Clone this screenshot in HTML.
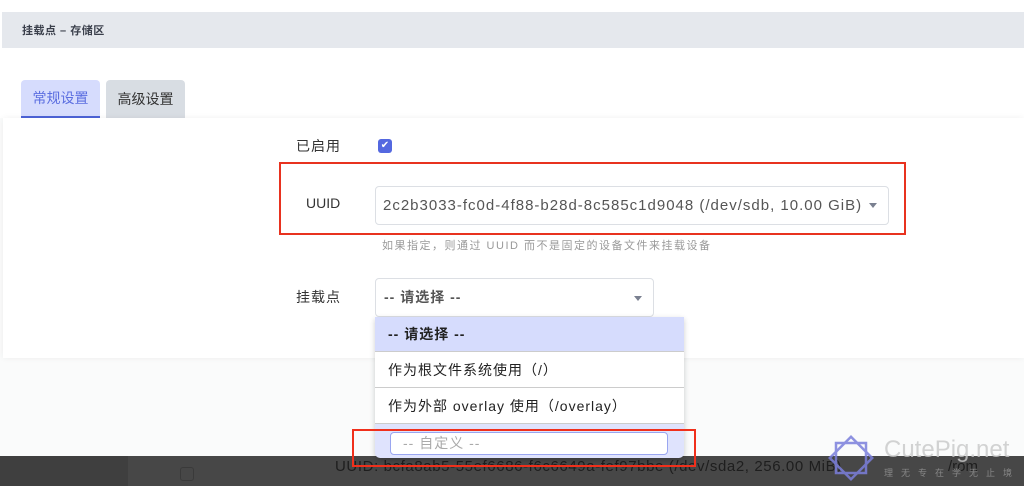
<!DOCTYPE html>
<html><head><meta charset="utf-8"><style>
*{margin:0;padding:0;box-sizing:border-box}
body{width:1024px;height:486px;overflow:hidden;background:#fff;font-family:"Liberation Sans","Noto Sans CJK SC",sans-serif;position:relative}
.a{position:absolute}
</style></head><body>
<div class="a" style="left:2px;top:12px;width:1022px;height:36px;background:#e5e8ed"></div>
<div class="a" style="left:22px;top:22px;font-size:11px;font-weight:bold;color:#3a3f4b;letter-spacing:.5px">挂载点 – 存储区</div>
<div class="a" style="left:0;top:118px;width:1024px;height:340px;background:#fafbfb"></div>
<div class="a" style="left:21px;top:80px;width:79px;height:38px;background:#d6dcfd;border-radius:4px 4px 0 0;border-bottom:2px solid #4d63d8;color:#5b6ee0;font-size:14px;text-align:center;line-height:36px">常规设置</div>
<div class="a" style="left:106px;top:80px;width:79px;height:38px;background:#d8dde3;border-radius:4px 4px 0 0;color:#333;font-size:14px;text-align:center;line-height:38px">高级设置</div>
<div class="a" style="left:3px;top:118px;width:1021px;height:240px;background:#fff;box-shadow:0 0 6px rgba(0,0,0,.06)"></div>
<div class="a" style="left:296px;top:136px;font-size:14px;color:#333;letter-spacing:1px">已启用</div>
<div class="a" style="left:378px;top:139px;width:14px;height:14px;background:#5468e0;border-radius:3px;color:#fff;font-size:10px;text-align:center;line-height:14px">✔</div>
<div class="a" style="left:279px;top:162px;width:627px;height:73px;border:2px solid #e8321f"></div>
<div class="a" style="left:306px;top:195px;font-size:14px;color:#333">UUID</div>
<div class="a" style="left:375px;top:186px;width:514px;height:39px;border:1px solid #dcdfe4;border-radius:4px;font-size:15px;color:#555;padding-left:7px;line-height:37px;letter-spacing:1px;white-space:nowrap">2c2b3033-fc0d-4f88-b28d-8c585c1d9048 (/dev/sdb, 10.00 GiB)</div>
<div class="a" style="left:869px;top:203px;border:4px solid transparent;border-top:5px solid #7a8090;width:0;height:0"></div>
<div class="a" style="left:382px;top:237px;font-size:11px;color:#999;letter-spacing:1.5px;white-space:nowrap">如果指定，则通过 UUID 而不是固定的设备文件来挂载设备</div>
<div class="a" style="left:296px;top:287px;font-size:14px;color:#333;letter-spacing:1px">挂载点</div>
<div class="a" style="left:375px;top:278px;width:279px;height:39px;border:1px solid #dcdfe4;border-radius:4px;font-size:14px;color:#555;padding-left:8px;line-height:37px;font-weight:bold;letter-spacing:1px">-- 请选择 --</div>
<div class="a" style="left:634px;top:296px;border:4px solid transparent;border-top:5px solid #7a8090;width:0;height:0"></div>
<div class="a" style="left:0;top:456px;width:1024px;height:30px;background:#474747"></div>
<div class="a" style="left:0;top:456px;width:128px;height:30px;background:#3f3f3f"></div>
<div class="a" style="left:180px;top:467px;width:14px;height:14px;border:1px solid #3a3a3a;border-radius:3px"></div>
<div class="a" style="left:335px;top:458px;font-size:15px;color:#1e1e1e;white-space:nowrap;letter-spacing:.6px">UUID: bcfa8ab5-55ef6686-f6c6649a-fef97bbe (/dev/sda2, 256.00 MiB)</div>
<div class="a" style="left:948px;top:458px;font-size:15px;color:#1e1e1e">/rom</div>
<div class="a" style="left:375px;top:317px;width:309px;height:141px;background:#dfe3fd;border-radius:0 0 5px 5px;box-shadow:0 2px 6px rgba(0,0,0,.2);overflow:hidden">
<div style="height:35px;background:#d6dcfd;border-bottom:1px solid #ccc;font-size:14px;font-weight:bold;color:#222;padding-left:13px;line-height:35px;letter-spacing:1px">-- 请选择 --</div>
<div style="height:36px;background:#fff;border-bottom:1px solid #ccc;font-size:14px;color:#222;padding-left:13px;line-height:36px;letter-spacing:1px">作为根文件系统使用（/）</div>
<div style="height:36px;background:#fff;border-bottom:1px solid #ccc;font-size:14px;color:#222;padding-left:13px;line-height:36px;letter-spacing:1px;white-space:nowrap">作为外部 overlay 使用（/overlay）</div>
<div style="margin:8px 0 0 15px;width:278px;height:23px;background:#fff;border:1px solid #9aa6f0;border-radius:4px;font-size:14px;color:#aaa;padding-left:12px;line-height:21px;letter-spacing:1px">-- 自定义 --</div>
</div>
<div class="a" style="left:352px;top:429px;width:344px;height:38px;border:2px solid #f0301c"></div>
<svg class="a" style="left:826px;top:433px" width="50" height="50" viewBox="0 0 50 50"><g fill="none" stroke="#7b7fdc" stroke-width="2.5" opacity=".85"><rect x="10" y="10" width="30" height="30"/><rect x="10" y="10" width="30" height="30" transform="rotate(45 25 25)"/></g></svg>
<div class="a" style="left:884px;top:436px;font-size:24px;color:#c8c8c8;opacity:.8">CutePig.net</div>
<div class="a" style="left:884px;top:466px;font-size:9px;color:#888;letter-spacing:8px">理无专在学无止境</div>
</body></html>
